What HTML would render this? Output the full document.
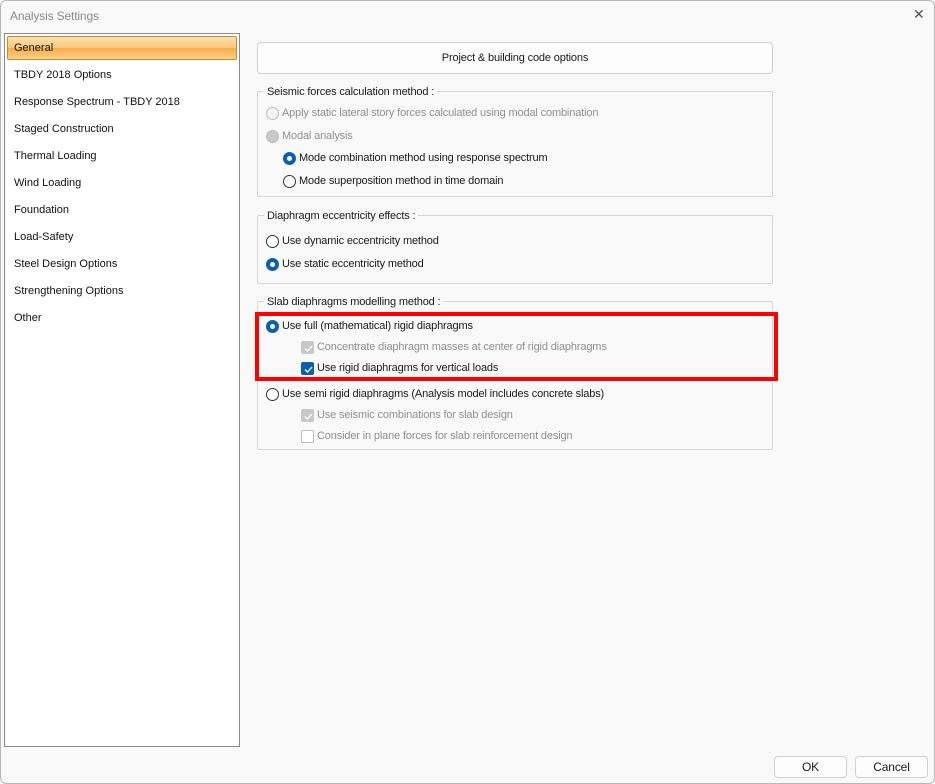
<!DOCTYPE html>
<html><head><style>
*{margin:0;padding:0;box-sizing:border-box}
body{width:935px;height:784px;background:#f9f9f9;font-family:"Liberation Sans",sans-serif;font-size:11px;letter-spacing:-0.15px;color:#1a1a1a;position:relative;overflow:hidden}
.a{position:absolute;white-space:nowrap;line-height:17px}
.win{position:absolute;left:0;top:0;width:935px;height:784px;border:1px solid #b8b8b8;border-radius:6px}
.side{position:absolute;left:4px;top:33px;width:236px;height:714px;background:#fff;border:1px solid #8a8a8a}
.side .t{position:absolute;left:9px;font-size:11px;letter-spacing:0;color:#111;line-height:16px}
.sel{position:absolute;left:2px;top:2px;width:230px;height:24px;border:1px solid #c88a2c;border-radius:2px;background:linear-gradient(#fde2b0,#fbc77a 50%,#f8ad4a 51%,#fbd089)}
.grp{position:absolute;left:257px;width:516px;border:1px solid #d6d6d6;border-radius:2px}
.gt{position:absolute;left:6px;top:-8px;background:#f9f9f9;padding:0 3px;color:#1a1a1a;line-height:17px}
.r{position:absolute;width:13px;height:13px;border-radius:50%;border:1px solid #333;background:#fff}
.r.on{background:#0a5fb4;border-color:#0a5fb4}
.r.on::after{content:"";position:absolute;left:3px;top:3px;width:5px;height:5px;border-radius:50%;background:#fff}
.r.dis{border-color:#bdbdbd;background:#f3f3f3}
.c{position:absolute;width:13px;height:13px;border-radius:2px;border:1px solid #333;background:#fff}
.c.on{background:#0a5fb4;border-color:#0a5fb4}
.c.dis{background:#c8c8c8;border-color:#c8c8c8}
.c.dise{border-color:#bdbdbd}
.c svg{position:absolute;left:1px;top:1px}
.g{color:#8f8f8f}
.btn{position:absolute;background:#fdfdfd;border:1px solid #d0d0d0;border-radius:4px;text-align:center}
</style></head><body>
<div class="win"></div>
<div class="a" style="left:10px;top:8px;font-size:12px;color:#8a8a8a">Analysis Settings</div>
<div class="a" style="left:913px;top:6px;font-size:14px;color:#555">✕</div>
<div class="side">
<div class="sel"></div>
<div class="t" style="top:6px">General</div>
<div class="t" style="top:33px">TBDY 2018 Options</div>
<div class="t" style="top:60px">Response Spectrum - TBDY 2018</div>
<div class="t" style="top:87px">Staged Construction</div>
<div class="t" style="top:114px">Thermal Loading</div>
<div class="t" style="top:141px">Wind Loading</div>
<div class="t" style="top:168px">Foundation</div>
<div class="t" style="top:195px">Load-Safety</div>
<div class="t" style="top:222px">Steel Design Options</div>
<div class="t" style="top:249px">Strengthening Options</div>
<div class="t" style="top:276px">Other</div>
</div>
<div class="btn" style="left:257px;top:42px;width:516px;height:32px;line-height:31px">Project &amp; building code options</div>

<div class="grp" style="top:91px;height:106px"><span class="gt">Seismic forces calculation method :</span></div>
<div class="r dis" style="left:266px;top:107px"></div><div class="a g" style="left:282px;top:105px">Apply static lateral story forces calculated using modal combination</div>
<div class="r dis" style="left:266px;top:130px;background:#c8c8c8"></div><div class="a g" style="left:282px;top:128px">Modal analysis</div>
<div class="r on" style="left:283px;top:152px"></div><div class="a" style="left:299px;top:150px">Mode combination method using response spectrum</div>
<div class="r" style="left:283px;top:175px"></div><div class="a" style="left:299px;top:173px">Mode superposition method in time domain</div>

<div class="grp" style="top:215px;height:69px"><span class="gt">Diaphragm eccentricity effects :</span></div>
<div class="r" style="left:266px;top:235px"></div><div class="a" style="left:282px;top:233px">Use dynamic eccentricity method</div>
<div class="r on" style="left:266px;top:258px"></div><div class="a" style="left:282px;top:256px">Use static eccentricity method</div>

<div class="grp" style="top:301px;height:149px"><span class="gt">Slab diaphragms modelling method :</span></div>
<div class="a" style="left:255px;top:312px;width:523px;height:69px;border:4px solid #f00"></div>
<div class="r on" style="left:266px;top:320px"></div><div class="a" style="left:282px;top:318px">Use full (mathematical) rigid diaphragms</div>
<div class="c dis" style="left:301px;top:341px"><svg width="11" height="11"><path d="M2 5.5l2.5 2.5 4.5-5" stroke="#fff" stroke-width="1.3" fill="none"/></svg></div><div class="a g" style="left:317px;top:339px">Concentrate diaphragm masses at center of rigid diaphragms</div>
<div class="c on" style="left:301px;top:362px"><svg width="11" height="11"><path d="M2 5.5l2.5 2.5 4.5-5" stroke="#fff" stroke-width="1.3" fill="none"/></svg></div><div class="a" style="left:317px;top:360px">Use rigid diaphragms for vertical loads</div>
<div class="r" style="left:266px;top:388px"></div><div class="a" style="left:282px;top:386px">Use semi rigid diaphragms (Analysis model includes concrete slabs)</div>
<div class="c dis" style="left:301px;top:409px"><svg width="11" height="11"><path d="M2 5.5l2.5 2.5 4.5-5" stroke="#fff" stroke-width="1.3" fill="none"/></svg></div><div class="a g" style="left:317px;top:407px">Use seismic combinations for slab design</div>
<div class="c dise" style="left:301px;top:430px"></div><div class="a g" style="left:317px;top:428px">Consider in plane forces for slab reinforcement design</div>

<div class="btn" style="left:774px;top:756px;width:73px;height:22px;line-height:20px;font-size:12px">OK</div>
<div class="btn" style="left:855px;top:756px;width:73px;height:22px;line-height:20px;font-size:12px">Cancel</div>
</body></html>
